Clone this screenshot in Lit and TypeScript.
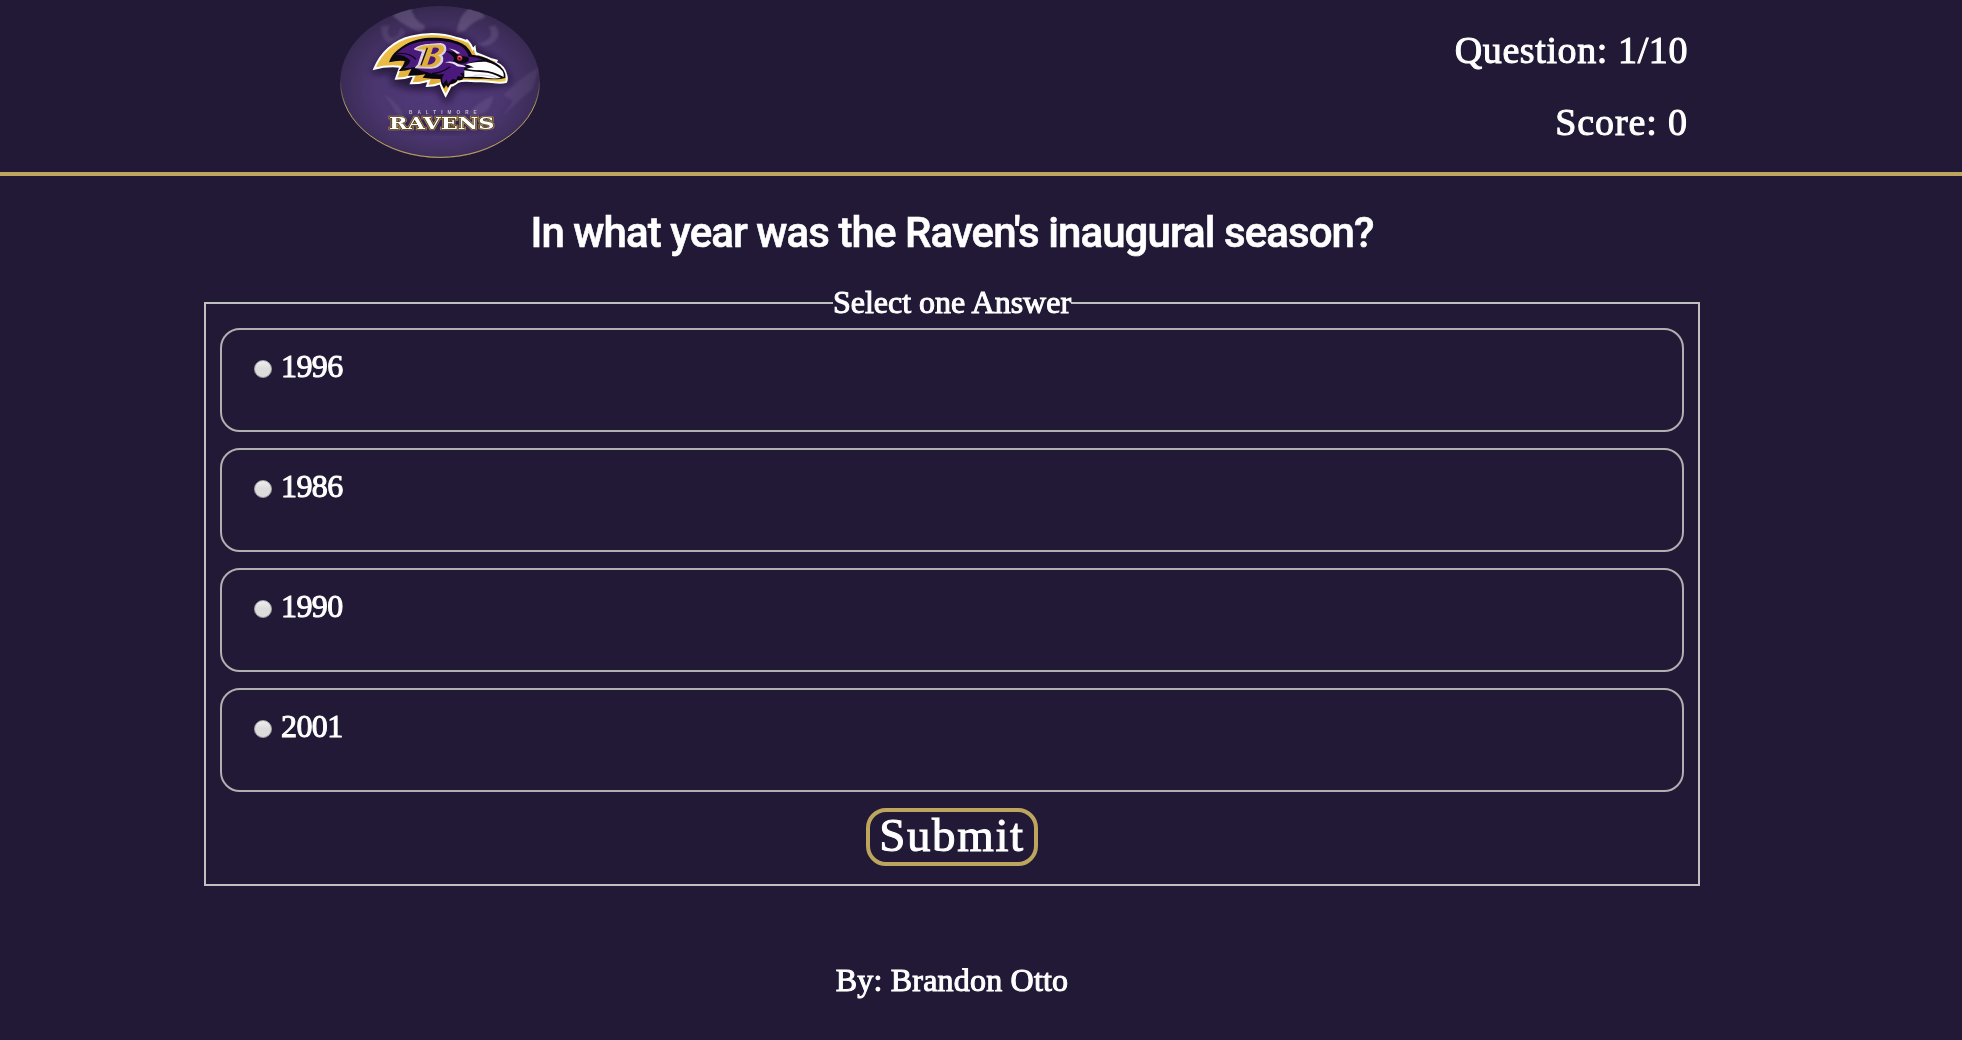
import { LitElement, html, css } from "lit";
import { customElement, state } from "lit/decorators.js";

@customElement("team-logo")
class TeamLogo extends LitElement {
  static styles = css`
    :host { display: block; width: 200px; height: 152px; }
    .badge { display: block; width: 200px; height: 152px; }
    .city { font: 700 14px "Liberation Sans", sans-serif; fill: #c4bfcc; }
    .team { font: 700 49px "DejaVu Serif", serif; fill: #fff; stroke: #3a2a14; stroke-width: 3px; paint-order: stroke; }
    .glow { font: 700 49px "DejaVu Serif", serif; fill: none; stroke: #a5854a; stroke-width: 7px; }
  `;

  render() {
    return html`<svg class="badge" viewBox="30 18 600 456" role="img" aria-label="Baltimore Ravens">
      <defs>
        <radialGradient id="bg" cx="50%" cy="54%" r="54%">
          <stop offset="0" stop-color="#533a7c" />
          <stop offset=".6" stop-color="#4b366f" />
          <stop offset="1" stop-color="#372950" />
        </radialGradient>
        <linearGradient id="rim" x1="0" y1="0" x2="0" y2="1">
          <stop offset="0" stop-color="#bda55d" stop-opacity=".1" />
          <stop offset=".35" stop-color="#bda55d" />
        </linearGradient>
        <linearGradient id="gold" x1="0" y1="0" x2="1" y2="1">
          <stop offset="0" stop-color="#f0c64c" />
          <stop offset=".6" stop-color="#e0ad38" />
          <stop offset="1" stop-color="#f4d655" />
        </linearGradient>
        <clipPath id="oval"><ellipse cx="330" cy="246" rx="300" ry="228" /></clipPath>
        <filter id="soft" x="-30%" y="-30%" width="160%" height="160%"><feGaussianBlur stdDeviation="11" /></filter>
        <filter id="fine"><feGaussianBlur stdDeviation="2.5" /></filter>
      </defs>
      <g clip-path="url(#oval)">
        <ellipse cx="330" cy="246" rx="300" ry="228" fill="url(#bg)" />
        <g filter="url(#fine)" fill="#a592b8">
          <path opacity=".28" d="M188 48 Q206 22 242 20 Q252 64 286 78 Q284 92 270 97 Q222 78 188 48Z" />
          <path opacity=".28" d="M380 98 Q386 44 420 22 Q450 22 466 52 Q430 62 402 94Z" />
          <path opacity=".16" d="M154 78 Q148 118 184 134 Q214 128 226 98 L214 82 Q204 114 182 112 Q166 100 180 76Z" />
          <path opacity=".2" d="M496 76 Q518 104 490 128 Q464 146 438 132 Q478 126 482 104 Q484 88 474 80Z" />
          <path opacity=".14" d="M160 282 Q190 296 214 332 Q224 356 218 376 Q186 310 160 282Z" />
          <path opacity=".16" d="M492 286 Q438 306 412 346 Q458 354 480 322Z" />
          <path opacity=".12" d="M628 200 Q570 232 520 286 L548 302 L516 350 L608 266Z" />
        </g>
        <path filter="url(#soft)" opacity=".7" fill="#150a26"
          d="M124 220 Q190 92 320 92 Q410 98 450 152 Q530 180 544 250 Q450 270 384 262 L350 312 L320 270 L240 268 L184 250 L190 220Z" />
        <ellipse filter="url(#soft)" opacity=".45" cx="334" cy="372" rx="150" ry="22" fill="#150a26" />
      </g>
      <path d="M31.5 246 A298.5 226 0 0 0 628.5 246" fill="none" stroke="url(#rim)" stroke-width="3" />
      <path d="M130 416 A300 228 0 0 0 530 416 A300 224 0 0 1 130 416Z" fill="#bda55d" />

      <path fill="url(#gold)" stroke="#fff" stroke-width="6" stroke-linejoin="miter"
        d="M133 206 C152 158 192 122 242 110 C296 97 350 104 384 115 C398 119 407 122 412 126 L409 119 Q424 132 428 148 L434 142 Q435 156 440 165 L441 160 Q463 168 485 178 L500 182 L497 188 Q522 198 528 222 Q533 237 528 246 C502 253 477 241 444 244 C420 244 398 238 382 247 Q366 258 362 258 L347 287 Q335 265 331 250 Q315 257 291 258 L297 242 Q270 250 243 250 L254 225 Q226 236 198 236 L211 200 Q170 196 133 206Z" />
      <path fill="#0b0712"
        d="M177 187 Q184 165 203 150 C235 124 262 115 300 113 C356 112 390 124 408 138 Q420 150 426 164 Q458 166 486 183 Q518 196 526 222 L526 234 C500 242 470 235 444 236 L400 235 Q397 243 383 240 Q378 251 361 253 L354 263 L348 256 L342 266 Q332 252 331 237 Q306 237 278 233 L286 223 Q262 228 234 227 L244 207 Q226 214 206 213 Q222 197 224 183 Q204 180 177 187Z" />
      <path fill="#4b197d"
        d="M198 163 C222 138 256 123 302 122 C352 121 384 130 399 143 Q413 155 416 170 Q437 169 458 179 C433 182 418 187 407 195 Q400 208 402 218 L390 219 L398 230 L383 228 L379 239 L367 237 L354 253 L350 238 L339 251 Q332 235 343 222 Q315 227 287 215 Q269 214 256 201 Q236 205 222 204 Q240 193 241 181 Q224 165 198 163Z" />
      <path fill="none" stroke="#0b0712" stroke-width="4" d="M202 161 Q238 157 258 178 M306 220 Q334 220 360 200" />
      <path fill="#fff"
        d="M407 193 Q431 184 467 185 Q501 192 518 214 Q523 223 521 231 Q493 214 456 211 Q430 211 410 207 Q423 202 433 203 Q418 195 407 193Z" />
      <path fill="#fff" d="M403 211 Q430 216 458 217 Q489 219 513 234 Q485 238 454 231 Q426 229 403 231Z" />
      <path fill="none" stroke="#b9b4c0" stroke-width="2" d="M432 226 Q470 222 499 233" />
      <path fill="#0b0712" d="M346 153 Q374 153 386 166 L414 171 Q423 185 403 190 Q382 194 370 182 Q379 171 346 153Z" />
      <path fill="#e9e4ee" d="M356 145 Q377 149 391 160 L381 161 Q371 152 356 145Z M344 187 Q370 180 386 193 Q401 194 410 202 L381 199 Q371 189 344 187Z" />
      <circle cx="389" cy="174" r="8" fill="#bd2c42" />
      <path fill="none" stroke="#ff9a8c" stroke-width="2.5" d="M385 169 Q393 168 395 175" />
      <circle cx="389" cy="175" r="2.6" fill="#21050e" />

      <path fill="#d8d2e2" stroke="#d8d2e2" stroke-width="4" stroke-linejoin="round"
        d="M254 147 Q270 134 300 133 L332 131 Q349 134 347 150 Q343 162 333 165 Q342 175 335 188 Q324 204 303 204 L257 203 L265 194 L278 154Z" />
      <path fill="#e0ae3b"
        d="M258 147 Q272 137 298 136 L330 134 Q344 137 342 150 Q338 162 322 166 Q337 171 330 185 Q320 200 302 201 L263 200 L271 194 L288 149Z" />
      <path fill="#4b197d" d="M309 143 L303 162 L314 161 Q327 155 327 147 Q324 142 309 143Z M301 169 L292 194 L303 193 Q316 188 317 177 Q314 168 301 169Z" />
      <path fill="none" stroke="#160a25" stroke-width="4" d="M292 143 L273 196" />

      <text class="city" x="237" y="342" textLength="203">BALTIMORE</text>
      <text class="glow" x="177" y="387" textLength="316" lengthAdjust="spacingAndGlyphs">RAVENS</text>
      <text class="team" x="177" y="387" textLength="316" lengthAdjust="spacingAndGlyphs">RAVENS</text>
    </svg>`;
  }
}

@customElement("app-root")
class AppRoot extends LitElement {
  @state() private selected = "";
  private answers = ["1996", "1986", "1990", "2001"];

  static styles = css`
    :host { display: block; }
    .page {
      box-sizing: border-box; width: 100%; height: 1040px; overflow: hidden;
      background: #221936; color: #fff;
      font-family: "Liberation Serif", serif; -webkit-text-stroke: 1px #fff;
    }
    .header {
      box-sizing: border-box; height: 176px; border-bottom: 4px solid #bda55d;
      display: flex; justify-content: space-between; padding: 6px 274px 0 340px;
    }
    .status { padding-top: 8px; text-align: right; font-size: 38px; line-height: 72px; }
    .line { white-space: nowrap; }
    .question-count { letter-spacing: 0.6px; }
    .score { letter-spacing: 0.9px; }
    .main { width: 1496px; margin-left: 204px; display: flex; flex-direction: column; align-items: center; }
    .question {
      margin: 29px 0 0; white-space: nowrap;
      font: 500 42px/56px "Roboto", sans-serif; letter-spacing: -0.93px; -webkit-text-stroke: 0.6px #fff;
    }
    .quiz {
      box-sizing: border-box; width: 1496px; height: 603px; margin: 22px 0 0; padding: 0 14px;
      border: 2px solid #c0c0c0; min-width: 0;
    }
    .legend { margin: 0 auto; padding: 0 0 2px; font-size: 32px; line-height: 38px; white-space: nowrap; }
    .answers { display: flex; flex-direction: column; gap: 16px; padding-top: 5px; }
    .answer {
      box-sizing: border-box; height: 104px; border: 2px solid #b0b0b0; border-radius: 20px;
      display: flex; align-items: flex-start; padding: 16px 32px; font-size: 32px; line-height: 40px; letter-spacing: -0.6px;
    }
    .radio {
      appearance: none; box-sizing: border-box; width: 18px; height: 18px; margin: 14px 9px 0 0; border-radius: 50%;
      border: 1px solid #a4a2a6; background: linear-gradient(#eee, #dcdcdc 45%, #dcdcdc);
    }
    .radio:checked { background: radial-gradient(circle, #333 0 4px, #dcdcdc 5px); }
    .submit {
      display: block; box-sizing: border-box; width: 172px; height: 58px; margin: 16px auto 0; padding: 0 0 4px;
      border: 4px solid #bda55d; border-radius: 20px; background: transparent; color: #fff;
      font: 47px/46px "Liberation Serif", serif; letter-spacing: 1.6px; -webkit-text-stroke: 1px #fff;
    }
    .footer { margin-top: 74px; font-size: 32px; line-height: 40px; letter-spacing: 0.2px; white-space: nowrap; }
  `;

  render() {
    return html`<div class="page">
      <header class="header">
        <team-logo></team-logo>
        <div class="status">
          <div class="line question-count">Question: 1/10</div>
          <div class="line score">Score: 0</div>
        </div>
      </header>
      <main class="main">
        <h1 class="question">In what year was the Raven's inaugural season?</h1>
        <fieldset class="quiz">
          <legend class="legend">Select one Answer</legend>
          <div class="answers">
            ${this.answers.map(
              (a) => html`<label class="answer">
                <input class="radio" type="radio" name="answer" .checked=${this.selected === a} @change=${() => (this.selected = a)} />
                <span>${a}</span>
              </label>`
            )}
          </div>
          <button class="submit" type="button">Submit</button>
        </fieldset>
        <footer class="footer">By: Brandon Otto</footer>
      </main>
    </div>`;
  }
}
